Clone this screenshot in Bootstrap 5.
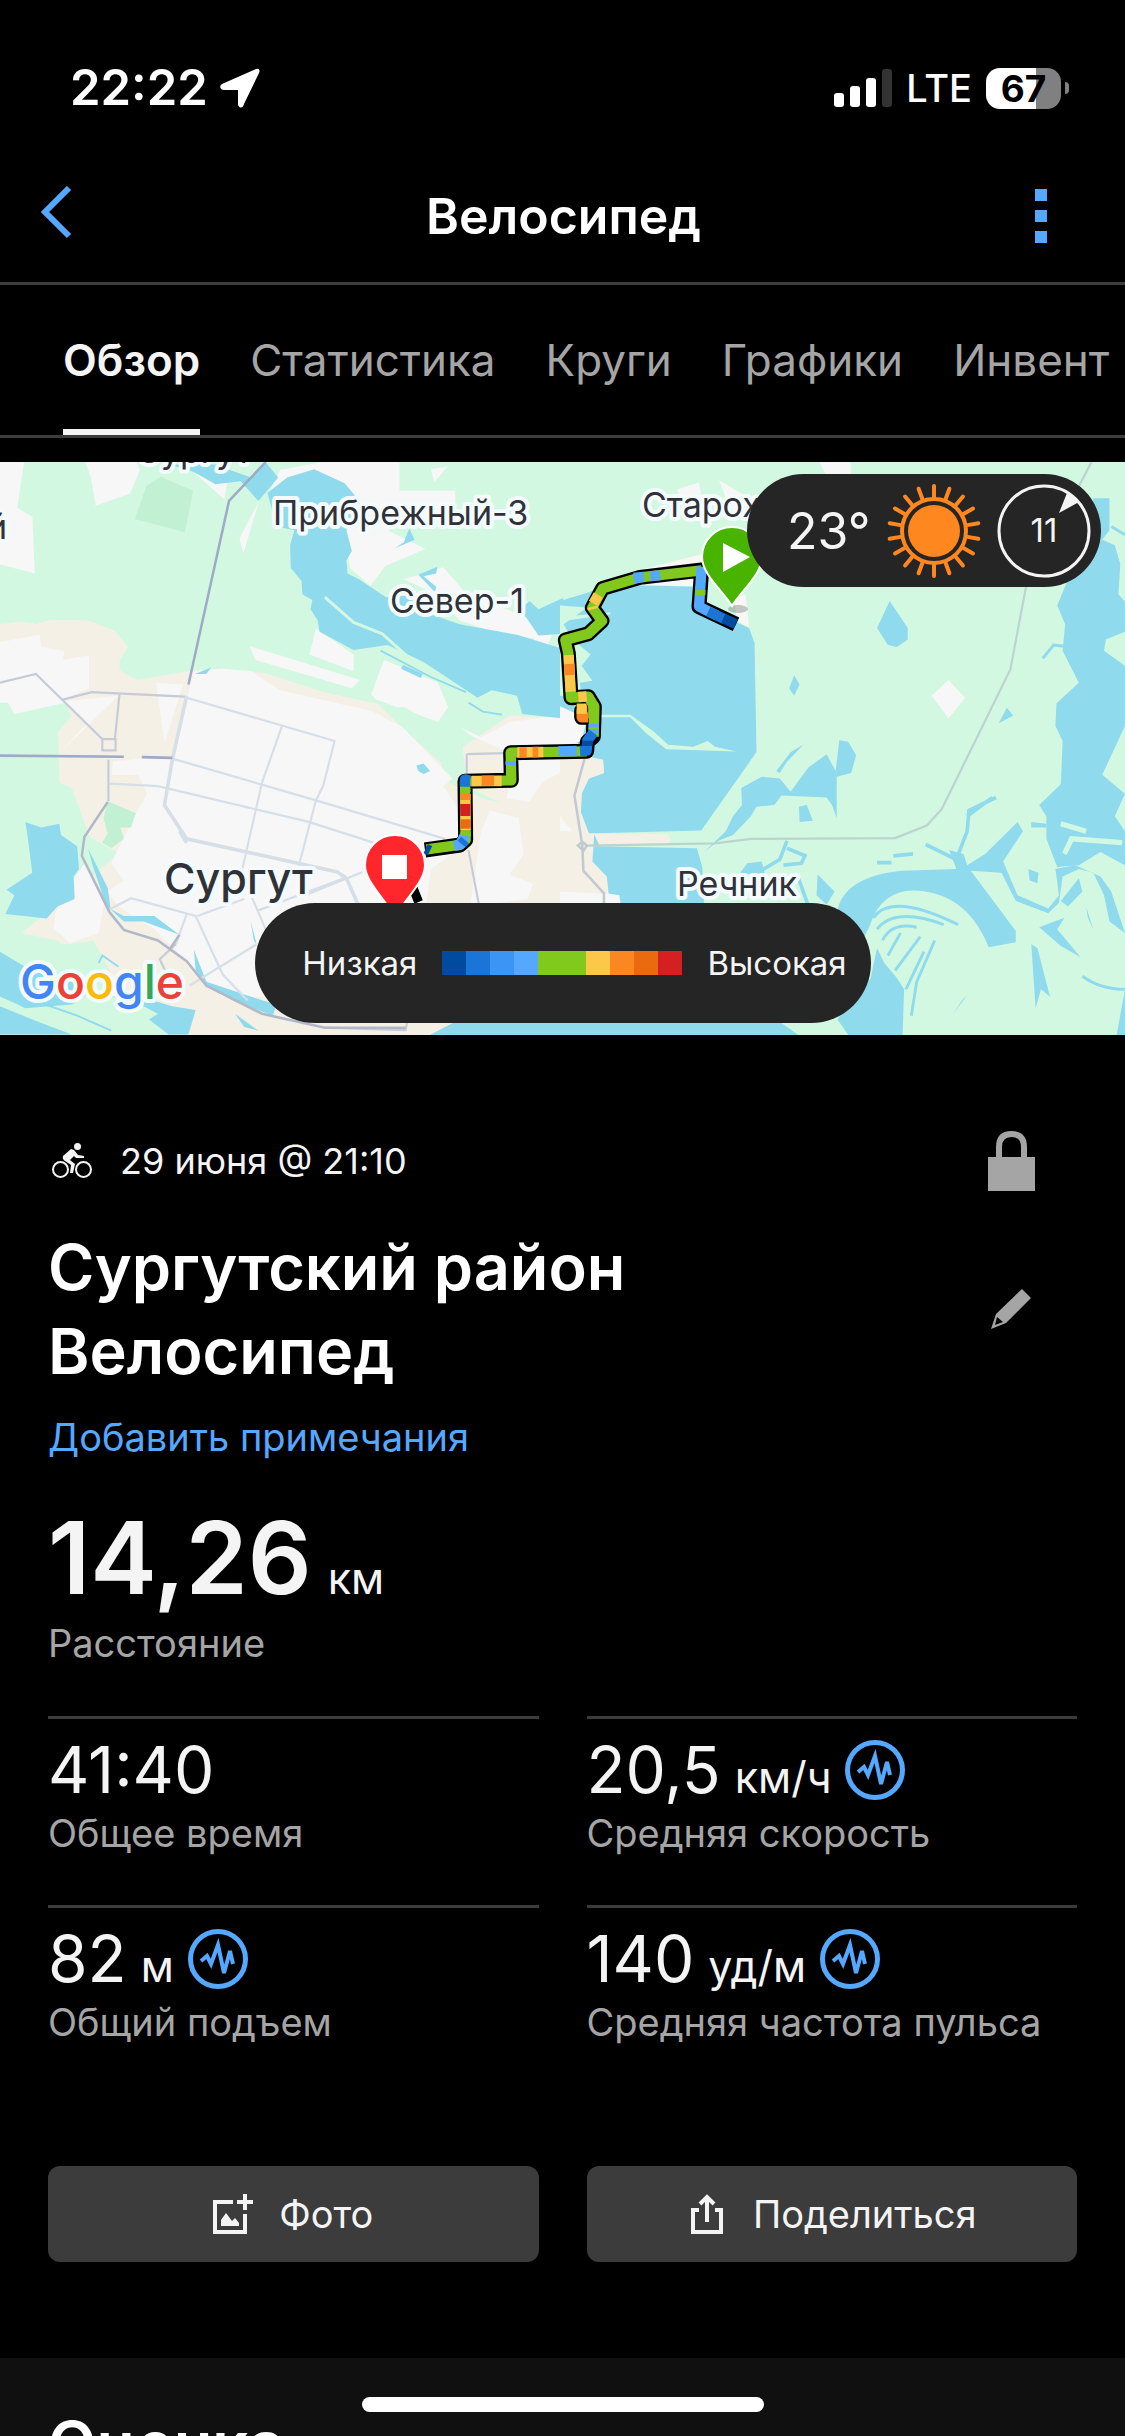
<!DOCTYPE html>
<html lang="ru" data-bs-theme="dark">
<head>
<meta charset="utf-8">
<meta name="viewport" content="width=device-width, initial-scale=1">
<title>Велосипед</title>
<link href="https://cdn.jsdelivr.net/npm/bootstrap@5.3.0/dist/css/bootstrap.min.css" rel="stylesheet">
<style>
  :root { --ink:#f4f4f4; --dim:#a5a5a5; --accent:#55a8ff; --rule:#3c3c3c; --panel:#252525; }
  body { background:#000; color:var(--ink); font-family:Inter,"Noto Sans",sans-serif; font-size:38px; line-height:46px; height:100vh; overflow:hidden; }
  svg { display:block; flex:none; }
  .status-row { height:150px; padding:26px 56px 0 70px; color:#fff; }
  .status-left { gap:12px; }
  .status-right { gap:14px; }
  .clock { font-size:49px; font-weight:600; }
  .carrier { font-size:38px; font-weight:500; }
  .batt { width:75px; height:41px; border-radius:14px; background:linear-gradient(90deg,#fff 67%,#808080 67%); color:#000; font-size:37px; font-weight:700; line-height:41px; }
  .batt-tip { width:4px; height:12px; border-radius:0 4px 4px 0; background:#808080; }
  .top-nav { height:135px; padding:0 60px 0 38px; border-bottom:3px solid var(--rule); }
  .top-nav h1 { font-size:50px; font-weight:600; line-height:60px; }
  .icon-btn { padding:0; border:0; background:none; color:var(--accent); }
  .tab-strip { border-bottom:3px solid var(--rule); padding-left:63px; gap:50px; overflow:hidden; margin-bottom:24px; }
  .tab-strip .nav-link { padding:0; font-size:44px; line-height:150px; height:150px; color:var(--dim); white-space:nowrap; }
  .tab-strip .nav-link.active { color:var(--ink); font-weight:600; box-shadow:inset 0 -6px var(--ink); }
  .map-box { height:573px; }
  .map-box > svg { width:100%; height:100%; }
  .map-label { font-family:Inter,"Noto Sans",sans-serif; fill:#303238; stroke:#f4fbff; stroke-width:8px; stroke-linejoin:round; paint-order:stroke; font-size:34px; }
  .map-city { font-size:43px; font-weight:500; }
  .map-brand { font-size:48px; font-weight:500; }
  .weather { top:12px; right:24px; height:113px; width:354px; padding:0 10px 0 40px; background:var(--panel); }
  .weather-temp { font-size:50px; }
  .legend-pill { left:50%; bottom:12px; transform:translateX(-50%); height:120px; width:616px; padding-left:24px; background:var(--panel); font-size:33px; gap:25px; }
  .swatch { width:24px; height:24px; }
  .details { padding:93px 48px 96px; }
  .when { height:66px; margin-bottom:31px; font-size:36px; gap:28px; }
  .side-slot { width:132px; color:var(--dim); }
  .act-title { font-size:63px; line-height:84px; font-weight:600; }
  .note-link { color:var(--accent); line-height:48px; margin-top:20px; }
  .hero { font-size:100px; line-height:100px; font-weight:600; margin-top:47px; margin-bottom:12px; }
  .unit { font-size:43px; line-height:43px; font-weight:400; }
  .dim { color:var(--dim); }
  .stats { --bs-gutter-x:48px; margin-top:50px; }
  .stat { height:189px; border-top:3px solid var(--rule); padding-top:15px; }
  .stat-value { font-size:64px; line-height:72px; margin-bottom:4px; gap:14px; }
  .acts { --bs-gutter-x:48px; margin-top:72px; }
  .act-btn { height:96px; border:0; border-radius:12px; background:var(--rule); color:var(--ink); font-size:38px; gap:26px; }
  .rating { background:#101010; padding:44px 48px 72px; }
  .home-bar { bottom:24px; left:50%; transform:translateX(-50%); width:402px; height:15px; border-radius:8px; background:#fff; }
</style>
<script src="https://cdn.jsdelivr.net/npm/bootstrap@5.3.0/dist/js/bootstrap.bundle.min.js"></script>
</head>
<body>

<div class="status-row d-flex align-items-center justify-content-between">
  <div class="status-left d-flex align-items-center">
    <span class="clock">22:22</span>
    <svg width="40" height="40" viewBox="0 0 40 40" fill="currentColor"><path d="M36 1 2 16Q-1 18 1 21Q2 22 5 22L18 22V36Q18 39 20 39.500Q23 40 24 36L39 5Q41 0 36 1Z"/></svg>
  </div>
  <div class="status-right d-flex align-items-center">
    <svg width="58" height="38" viewBox="0 0 58 38" fill="#fff"><rect y="24" width="10" height="14" rx="3"/><rect x="16" y="17" width="10" height="21" rx="3"/><rect x="32" y="9" width="10" height="29" rx="3"/><rect x="48" width="10" height="38" rx="3" fill="#333"/></svg>
    <span class="carrier">LTE</span>
    <span class="d-flex align-items-center"><span class="batt text-center">67</span><span class="batt-tip ms-1"></span></span>
  </div>
</div>

<header class="top-nav d-flex align-items-center justify-content-between">
  <button class="icon-btn" type="button" aria-label="Назад"><svg width="60" height="60" viewBox="0 0 60 60" fill="none" stroke="currentColor" stroke-width="6"><path d="M31 2 7 26 31 50"/></svg></button>
  <h1 class="m-0">Велосипед</h1>
  <button class="icon-btn" type="button" aria-label="Меню"><svg width="36" height="54" viewBox="0 0 36 54" fill="currentColor"><path d="M6 0h12v12H6zM6 21h12v12H6zM6 42h12v12H6z"/></svg></button>
</header>

<nav class="nav flex-nowrap tab-strip">
  <a class="nav-link active" href="#">Обзор</a>
  <a class="nav-link" href="#">Статистика</a>
  <a class="nav-link" href="#">Круги</a>
  <a class="nav-link" href="#">Графики</a>
  <a class="nav-link" href="#">Инвент</a>
</nav>

<section class="map-box position-relative overflow-hidden">
  <svg viewBox="0 0 1125 573" preserveAspectRatio="xMidYMid slice">
    <rect width="1125" height="573" fill="#d3f8e2"/>
    <!-- western half of the map -->
    <g transform="translate(0 -7) scale(.359 .3763)">
      <path fill="#f7f7f7" d="M0 0H70L48 140 90 165 97 315 0 290ZM230 0 252 55 267 135 362 102 390 40 370 0ZM545 50 625 118 635 60ZM722 122 678 262 667 222ZM1000 0 1113 19V95H1268V150L1080 200 1185 250 1073 295 1032 348 975 300 960 200 750 100 780 40ZM1200 38 1248 30 1210 72ZM1125 330 1235 298 1300 370 1440 420 1540 470 1520 522 1485 486 1390 475 1280 440 1215 370ZM880 462 985 530V575L862 530ZM695 508 1003 598 980 620 712 545ZM1070 545 1220 605 1248 670 1215 716 1125 670 1065 672 1034 635Z"/>
      <path fill="#c1f0d3" d="M448 58 538 95 515 205 376 170 408 82Z"/>
      <path fill="#f5f0e5" d="M0 450 60 443 100 450 140 438 245 440 320 468 357 510 333 545V572L383 598 540 572 620 568 740 580 900 630 1020 655 1100 670 1250 800 1440 680 1568 700V1568H560L440 1500 330 1440 160 1290 60 1270 120 1225 160 1120 250 1015 165 870 162 735 198 695 175 640 0 660Z"/>
      <path fill="#d3f8e2" d="M0 660 175 640 198 695 162 735 165 870 200 885 250 1015 335 1060 310 1075 220 1150 50 1270 60 1290 190 1300 260 1290 330 1410 440 1470 550 1568H0ZM1035 645 1250 720 1300 740 1440 672 1568 700 1390 690 1285 735 1300 880 1395 925 1350 915 1225 860 1230 820 1115 720Z"/>
      <path fill="#f7f7f7" d="M0 497 110 478 115 510 180 520 175 545 248 532V620L175 650 198 655 40 688 22 658H0ZM178 655 330 640 200 760 172 785 240 715ZM435 606 510 610 458 765ZM540 575 620 568 700 575 780 625 1035 680 1120 722 1260 860 1235 880 1290 960V1040L1200 1100 1180 1250 1000 1500 780 1440 620 1440 430 1260 330 1200 300 1160 345 1130 310 1085 375 960 410 900 385 850 310 850 315 815 400 806 480 800ZM1285 725 1340 750 1420 710 1568 690V840L1510 870 1475 922 1410 912 1440 800 1310 745ZM1365 945 1445 965 1458 1060 1420 1115 1485 1140 1470 1180 1310 1200 1340 1000ZM155 1215 210 1120 240 1080 290 1190 275 1270 195 1297 150 1258Z"/>
      <path fill="#c1f0d3" d="M300 920 378 952 365 990 335 990 345 1020 310 1045 285 1030 300 1005 288 965Z"/>
      <path fill="#90daee" d="M470 25 540 45 600 78 670 70 720 122 775 60 740 19 700 60 640 40 600 25ZM745 100 800 60 875 38 960 75 1000 120 1000 150 965 200 980 255 965 280 968 315 1000 330 1075 378 1180 370 1190 420 1280 450 1440 478 1568 515V700L1455 688 1440 640 1370 625 1330 645 1180 550 1080 505 985 518 890 470 885 440 865 410 870 385 842 370 840 335 810 300 808 240 820 200 770 190ZM1450 410 1475 388 1500 410 1568 380V475L1500 480ZM1140 195 1155 225 1100 248 1125 232ZM1165 318 1218 297 1215 315 1180 322 1215 350 1212 365ZM543 582 588 565 575 582ZM1160 825 1180 820 1198 840 1180 848 1165 840ZM70 975 115 990 165 980 170 1010 215 1040 220 1100 205 1120 208 1180 160 1200 130 1232 15 1220 40 1170 18 1155 90 1110 75 1000ZM245 1045 300 1150 308 1205 298 1205 258 1090ZM305 1205 345 1225 430 1225 500 1275 400 1240 345 1240ZM698 1238 715 1300 707 1290ZM540 1315 575 1400 700 1440 770 1460 760 1490 650 1450 580 1412 545 1370ZM0 1320 70 1360 200 1400 290 1440 410 1445 480 1465 545 1475 525 1540H470L415 1500 440 1485 360 1445 250 1430 200 1460 70 1470 50 1460 0 1440ZM655 1485 720 1530 680 1520ZM0 1465 90 1500 200 1540H0Z"/>
      <path fill="none" stroke="#90daee" stroke-width="5" d="M110 1455 215 1490 310 1530M275 1350 285 1330 330 1360"/>
      <path fill="#90daee" d="M1200 1540 1280 1500H1568V1568H1200Z"/>
      <path fill="none" stroke="#d3f8e2" stroke-width="8" d="M905 378 985 445 1065 475 1140 540 1200 575 1298 630"/>
      <path fill="none" stroke="#90daee" stroke-width="5" d="M1060 520 1200 590 1298 630M1305 658 1345 682 1398 690"/>
      <path fill="none" stroke="#90daee" stroke-width="12" d="M1120 563 1175 587"/>
      <g fill="none" stroke="#d6dfe7" stroke-width="6">
        <path stroke-width="10" d="M520 640 480 810 458 930 520 1020 940 1108 965 1125 1000 1200M500 1000 520 1030"/>
        <path d="M520 645 932 760 900 880 880 918 830 1100M785 722 730 870 675 1100M485 808 880 918 1240 1020M305 873 440 880 860 975 1040 1030M965 1122 720 1210M1010 1108 850 1170M300 1210 365 1178 545 1225 620 1380 690 1450M528 1410 715 1300M520 1020 500 1000M520 1220 490 1300M690 1150 740 1260M550 1225 680 1180"/>
      </g>
      <g fill="none" stroke="#c6cbd8" stroke-width="6">
        <path d="M0 605 100 582 285 755H322V785H285V755M175 650 255 630 515 642M333 635 320 755M302 810V920M1300 795V850M1300 795 1410 792M1305 1050 1335 1200M490 1300 445 1340 460 1370M905 1522 1130 1528 1135 1500"/>
      </g>
      <g fill="none" stroke="#9fabc6" stroke-width="7">
        <path d="M740 19 638 122 525 610M0 799 345 802M395 803 480 805"/>
        <path stroke="#b1b9c8" d="M300 922 235 1015 228 1065 305 1215 345 1262 440 1290 520 1345 575 1410 730 1485 905 1522H1130M500 1275 475 1310"/>
      </g>
    </g>
    <!-- eastern half of the map -->
    <g transform="translate(560 -7) scale(.3603 .3763)">
      <path fill="#f7f7f7" d="M710 0H805L808 55H740ZM325 92 385 73 395 120 340 130ZM442 68 545 125 540 180 470 140ZM225 305 400 262V350L240 345ZM485 380 515 370 525 460 490 440ZM1078 598 1124 645 1078 700 1032 640Z"/>
      <path fill="#90daee" d="M0 388 80 365 130 345 390 350 380 400 480 440 525 460 540 500 545 770 545 790 392 998 80 1006 58 950 60 900 80 860 122 845 118 810 75 800 0 700Z"/>
      <path fill="#d3f8e2" d="M0 400 75 405 10 450 35 490 85 530 60 560 90 600 55 605 60 640 0 640ZM110 690H195L260 735 300 770 370 775 410 760 430 775 490 788 295 782 240 740 195 697H110ZM10 430 140 418V423L20 440Z"/>
      <path fill="#f5f0e5" d="M0 700 65 800 120 810 122 845 80 860 60 900 58 950 80 1006 300 1008 308 1025 290 1035 95 1040 90 1080 130 1120 140 1180 170 1190V1250H0Z"/>
      <path fill="#f7f7f7" d="M0 668 75 700 60 760 0 775ZM0 960 35 1000 0 1000ZM0 1160 165 1168V1200H0Z"/>
      <path fill="#90daee" d="M95 1008 110 1040 380 1045 395 1095 400 1200H170L165 1170 135 1165 130 1120 90 1080ZM915 388 965 460V490L935 510 910 505 880 460ZM650 585 665 610 650 640 636 620ZM1240 672 1258 692 1218 713ZM663 935 685 930 702 972 665 975ZM775 758 800 762 822 798 808 845 768 855 768 965 755 930 740 910 615 905 595 930 545 935 530 960 480 1010 440 1025 400 1055 460 1000 480 960 505 930 503 885 560 855 610 860 640 895 690 830 740 795 765 840ZM600 840 640 790 675 770 630 815 610 845ZM715 1115 762 1160 740 1195 712 1170Z"/>
      <path fill="none" stroke="#90daee" stroke-width="10" d="M630 1025 610 1075 540 1115M630 1045 680 1065 670 1085 620 1090M660 1120 690 1200M1130 960 1200 910M925 1065 980 1060M880 1083 920 1083M1015 1035 1100 1075 1130 1000 1135 945 1210 910"/>
      <path fill="#90daee" d="M1480 115H1525V200L1505 225 1540 240 1555 290 1550 370 1568 390V470L1515 490 1510 520 1568 560V720L1505 850 1568 900 1540 960 1568 1000V1090L1500 1055 1440 1090 1380 1095 1350 1020V960L1330 930 1390 875 1395 760 1375 720 1378 660 1440 605 1395 520 1402 450 1380 400 1410 330 1480 230Z"/>
      <path fill="#90daee" d="M770 1210Q790 1120 950 1105L1100 1100 1080 1050 1120 1060 1130 1090 1180 1060 1270 975 1285 1000 1230 1080 1270 1170 1355 1205 1385 1170 1375 1100 1430 1090 1500 1120 1530 1160 1568 1270 1525 1240 1510 1170 1480 1110 1440 1100 1395 1120 1385 1190 1355 1218 1265 1185 1225 1110 1140 1105 1265 1265V1295L1190 1308Q1140 1190 1040 1165 900 1130 860 1250L835 1300 860 1400 880 1310 900 1350 935 1390 955 1420 950 1568H820L770 1500 830 1420V1280Z"/>
      <path fill="#90daee" d="M1390 1185 1440 1125 1450 1160 1410 1200ZM1330 1255 1400 1230 1380 1260 1445 1335 1390 1305ZM1308 1300 1325 1310 1360 1440 1335 1420 1320 1470ZM1300 1100 1328 1110 1325 1138 1303 1130ZM1130 1435 1115 1450 1090 1488ZM1308 975 1350 980 1350 990H1308ZM1568 1420V1568H1540ZM1460 1200 1480 1260 1465 1230ZM0 1500H600L660 1540V1568H0ZM520 1085 560 1080 570 1120 500 1110Z"/>
      <path fill="none" stroke="#90daee" stroke-width="8" d="M870 1230Q920 1160 1105 1248M880 1260Q930 1200 1065 1248M895 1290Q920 1240 990 1255M910 1330 945 1270M930 1370 1000 1280M975 1490 990 1400 1040 1290M960 1420 1010 1320M1450 1385Q1500 1420 1568 1420M1340 540 1370 505 1400 508M1530 190 1568 212"/>
      <path fill="none" stroke="#d3f8e2" stroke-width="14" d="M1400 1060 1420 1020 1560 1030M1390 980 1460 1000"/>
      <path fill="none" stroke="#bcd3cf" stroke-width="6" d="M1475 19 1293 352 1250 570 1060 940 1018 985 930 1018 530 1020 430 1032 75 1038"/>
      <path fill="none" stroke="#c3c9d2" stroke-width="7" d="M68 808 40 905 62 1038 65 1105 122 1165V1200M50 1038 62 1028 75 1038 65 1052Z"/>
    </g>
    <g class="map-label">
      <text x="136" y="1">Сургут</text>
      <text x="7" y="77" text-anchor="end">й</text>
      <text x="273" y="63">Прибрежный-3</text>
      <text x="390" y="151">Север-1</text>
      <text x="642" y="55">Старох</text>
      <text x="677" y="434">Речник</text>
      <text class="map-city" x="164" y="432">Сургут</text>
    </g>
    <!-- ride track, coloured by speed -->
    <g transform="translate(380 78) scale(.33333)" fill="none" stroke-width="31">
      <path stroke="#000" stroke-width="45" stroke-linejoin="round" d="M1068 253 957 200 965 90 780 112 668 145 637 203 666 243 625 281 556 300 565 340 573 473 625 470 643 500 640 590 622 605 620 634 392 638 394 721 255 724 257 900 240 915 135 930M622 512 605 512V532H625M95 1070 120 1060"/>
      <g stroke-linejoin="round">
        <path stroke="#82c91e" d="M965 91 780 112 668 145 637 203 666 243 625 281 556 300 565 340 573 473 625 470 643 500 641 590M620 634 392 638 394 721 255 724 257 900 240 915 140 928"/>
        <path stroke="#fa8722" d="M622 512 605 512V532H625"/>
        <path stroke="#fcc84a" d="M590 506H620"/>
        <path stroke="#82c91e" d="M640 490V535"/>
        <path stroke="#55a8ff" d="M965 80 957 200 1010 226M590 633 535 634M641 552V582M255 885 240 914 222 918M775 97 778 128M824 92 827 122M392 664V675"/>
        <path stroke="#82c91e" d="M961 150V166M641 562V568"/>
        <path stroke="#1a75d6" d="M985 214 1035 238M640 578 622 602 620 632 600 633M255 740V718L270 722M245 912 255 900"/>
        <path stroke="#004a9f" d="M1030 235 1067 252M622 602V618M137 926 150 932"/>
        <path stroke="#fcc84a" d="M655 165 640 190M637 200 639 208M566 345 572 455M595 471 620 469M412 637 490 636M275 723H365M256 762 257 870"/>
        <path stroke="#fa8722" d="M568 372 569 405M418 637H440M458 636H475M305 722H342M256 762V780"/>
        <path stroke="#82c91e" d="M256 745V757M257 874V888"/>
        <path stroke="#ea6a10" d="M257 838V866"/>
        <path stroke="#d42021" d="M256 792V828"/>
      </g>
    </g>
    <ellipse cx="738" cy="147" rx="10" ry="4" fill="#000" opacity=".2"/>
    <path d="M732 144C722 128 702 112 702 95A30 30 0 0 1 762 95C762 112 742 128 732 144Z" fill="#48b400" stroke="#fff" stroke-width="2"/>
    <path d="M723 81 750 95 723 110Z" fill="#fff"/>
    <path d="M395 455C385 437 365 420 365 403A30 30 0 0 1 425 403C425 420 405 437 395 455Z" fill="#ff272b" stroke="#fff" stroke-width="2"/>
    <path d="M382 393h25v24h-25z" fill="#fff"/>
    <text class="map-label map-brand" x="20" y="537"><tspan fill="#4285f4">G</tspan><tspan fill="#ea4335">o</tspan><tspan fill="#fbbc05">o</tspan><tspan fill="#4285f4">g</tspan><tspan fill="#34a853">l</tspan><tspan fill="#ea4335">e</tspan></text>
  </svg>

  <div class="weather position-absolute rounded-pill d-flex align-items-center justify-content-between">
    <span class="weather-temp">23°</span>
    <svg width="94" height="94" viewBox="-47 -47 94 94" fill="none" stroke="#ff871f" stroke-width="4" stroke-linecap="round">
      <circle r="26" fill="#ff871f" stroke="none"/><circle r="32"/>
      <g id="rays"><path id="ray" d="M0-34V-45"/><use href="#ray" transform="rotate(20)"/><use href="#ray" transform="rotate(40)"/><use href="#ray" transform="rotate(60)"/><use href="#ray" transform="rotate(80)"/><use href="#ray" transform="rotate(100)"/><use href="#ray" transform="rotate(120)"/><use href="#ray" transform="rotate(140)"/><use href="#ray" transform="rotate(160)"/></g>
      <use href="#rays" transform="rotate(180)"/>
    </svg>
    <svg width="94" height="94" viewBox="-47 -47 94 94" fill="#f4f4f4"><circle r="45" fill="none" stroke="#f4f4f4" stroke-width="3"/><path d="M23-38 35-29 15-18Z"/><text y="11" font-size="33" text-anchor="middle">11</text></svg>
  </div>

  <div class="legend-pill position-absolute rounded-pill d-flex align-items-center justify-content-center">
    <span>Низкая</span>
    <span class="d-flex">
      <i class="swatch" style="background:#004a9f"></i><i class="swatch" style="background:#1a75d6"></i><i class="swatch" style="background:#3b95f5"></i><i class="swatch" style="background:#55a8ff"></i><i class="swatch" style="background:#82c91e"></i><i class="swatch" style="background:#82c91e"></i><i class="swatch" style="background:#fcc84a"></i><i class="swatch" style="background:#fa8722"></i><i class="swatch" style="background:#ea6a10"></i><i class="swatch" style="background:#d42021"></i>
    </span>
    <span>Высокая</span>
  </div>
</section>

<main class="details">
  <div class="when d-flex align-items-center">
    <svg class="ms-1" width="40" height="36" viewBox="0 0 40 36"><g fill="none" stroke="#f4f4f4" stroke-width="2"><circle cx="8.500" cy="26.500" r="7.500"/><circle cx="31.500" cy="26.500" r="7.500"/></g><circle cx="25.500" cy="3.500" r="3.500" fill="#f4f4f4"/><path fill="#f4f4f4" d="M19 6 11 13Q10 16 13 18L19 22 18 30H21L23 21 18 17 22 13 24 15H32V13L26 12 22 7Z"/></svg>
    <span class="flex-grow-1">29 июня @ 21:10</span>
    <button class="icon-btn side-slot d-flex justify-content-center" type="button" aria-label="Конфиденциальность"><svg width="47" height="60" viewBox="0 0 47 60"><path fill="none" stroke="currentColor" stroke-width="6" d="M11 28V16Q11 3 23.500 3T36 16V28"/><path fill="currentColor" d="M0 26H47V60H0z"/></svg></button>
  </div>
  <div class="d-flex align-items-center">
    <h2 class="act-title m-0 flex-grow-1">Сургутский район<br>Велосипед</h2>
    <button class="icon-btn side-slot d-flex justify-content-center" type="button" aria-label="Изменить"><svg width="40" height="40" viewBox="0 0 40 40"><path fill="currentColor" fill-rule="evenodd" d="M31 0 40 9 15 34 0 40 5 25ZM6 28 4 36 12 33Z"/></svg></button>
  </div>
  <div class="note-link"><a class="text-reset text-decoration-none" href="#">Добавить примечания</a></div>
  <div class="hero d-flex align-items-baseline gap-3"><span>14,26</span><span class="unit">км</span></div>
  <div class="dim">Расстояние</div>

  <div class="row stats">
    <div class="col-6"><div class="stat">
      <div class="stat-value d-flex align-items-baseline">41:40</div>
      <div class="dim">Общее время</div>
    </div></div>
    <div class="col-6"><div class="stat">
      <div class="stat-value d-flex align-items-baseline"><span>20,5</span><span class="unit">км/ч</span>
        <svg class="align-self-center" width="60" height="60" viewBox="0 0 60 60" fill="none" stroke="#55a8ff"><circle cx="30" cy="30" r="27.500" stroke-width="5"/><path id="wave" stroke-width="4" d="M13 32 19 27 23 35 30 16 36 44 42 22 45 35"/></svg></div>
      <div class="dim">Средняя скорость</div>
    </div></div>
    <div class="col-6"><div class="stat">
      <div class="stat-value d-flex align-items-baseline"><span>82</span><span class="unit">м</span>
        <svg class="align-self-center" width="60" height="60" viewBox="0 0 60 60" fill="none" stroke="#55a8ff"><circle cx="30" cy="30" r="27.500" stroke-width="5"/><use href="#wave"/></svg></div>
      <div class="dim">Общий подъем</div>
    </div></div>
    <div class="col-6"><div class="stat">
      <div class="stat-value d-flex align-items-baseline"><span>140</span><span class="unit">уд/м</span>
        <svg class="align-self-center" width="60" height="60" viewBox="0 0 60 60" fill="none" stroke="#55a8ff"><circle cx="30" cy="30" r="27.500" stroke-width="5"/><use href="#wave"/></svg></div>
      <div class="dim text-nowrap">Средняя частота пульса</div>
    </div></div>
  </div>

  <div class="row acts">
    <div class="col-6"><button type="button" class="btn act-btn w-100 d-flex align-items-center justify-content-center">
      <svg width="40" height="40" viewBox="0 0 40 40" fill="currentColor"><path d="M0 6H20V10H4V36H30V20H34V40H0ZM30 0H34V6H40V10H34V16H30V10H24V6H30ZM8 32V26L13 19 19 27 22 24 26 29V32Z"/></svg>
      Фото</button></div>
    <div class="col-6"><button type="button" class="btn act-btn w-100 d-flex align-items-center justify-content-center">
      <svg width="40" height="40" viewBox="0 0 40 40" fill="none" stroke="currentColor" stroke-width="4"><path d="M12 16H6V38H34V16H28M20 28V3M13 10 20 3 27 10"/></svg>
      Поделиться</button></div>
  </div>
</main>

<section class="rating"><h2 class="act-title m-0">Оценка</h2></section>
<div class="home-bar position-fixed"></div>
</body>
</html>
